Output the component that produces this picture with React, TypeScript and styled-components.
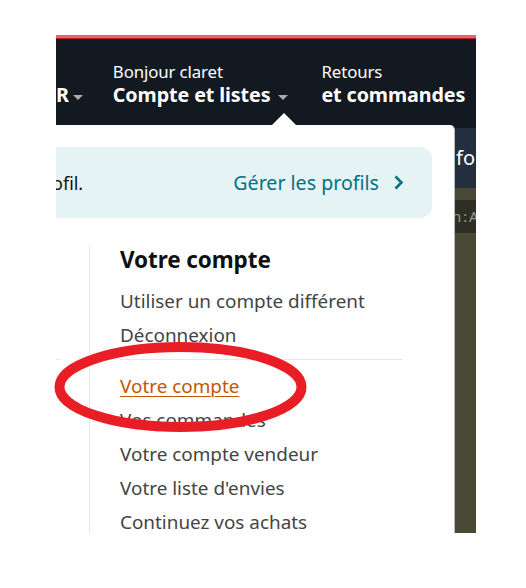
import React from "react";
import styled, { createGlobalStyle } from "styled-components";

const Global = createGlobalStyle`
  html, body { margin: 0; padding: 0; background: #ffffff; }
  body { font-family: "Noto Sans", "Open Sans", Arial, sans-serif; }
`;

const Page = styled.div`
  position: relative;
  width: 526px;
  height: 588px;
  overflow: hidden;
  background: #ffffff;
`;

const Shot = styled.div`
  margin: 35px 0 0 56px;
  width: 420px;
  height: 498px;
  overflow: hidden;
  display: flex;
  flex-direction: column;
  background: #131921;
`;

const Stripe = styled.div`
  flex: none;
  height: 3px;
  background: #e6646f;
  border-bottom: 1px solid #c21b2b;
`;

const Header = styled.header`
  position: relative;
  flex: none;
  height: 86px;
  box-sizing: border-box;
  padding-top: 23px;
  display: flex;
  align-items: flex-start;
  gap: 30px;
  color: #ffffff;
`;

const NavItem = styled.div<{ $pad?: number }>`
  display: flex;
  flex-direction: column;
  padding-left: ${(p) => p.$pad ?? 0}px;
`;

const Line1 = styled.span`
  font-size: 16.8px;
  line-height: 20px;
  height: 20px;
  white-space: nowrap;
  letter-spacing: -0.1px;
`;

const Line2 = styled.span`
  display: flex;
  align-items: center;
  font-size: 19.7px;
  font-weight: 700;
  line-height: 25px;
  white-space: nowrap;
  letter-spacing: -0.1px;
`;

const Caret = styled.span<{ $gap: number }>`
  display: inline-block;
  margin-left: ${(p) => p.$gap}px;
  margin-top: 6px;
  width: 0;
  height: 0;
  border-left: 5px solid transparent;
  border-right: 5px solid transparent;
  border-top: 5px solid #a7acb2;
`;

const Pointer = styled.span`
  position: absolute;
  left: 216px;
  bottom: 0;
  width: 0;
  height: 0;
  border-left: 12px solid transparent;
  border-right: 12px solid transparent;
  border-bottom: 12px solid #ffffff;
`;

const Body = styled.div`
  flex: 1;
  display: flex;
  min-height: 0;
`;

const Panel = styled.div`
  width: 398px;
  flex: none;
  background: #ffffff;
  border-right: 1px solid #b8b8b8;
  border-top-right-radius: 5px;
  display: flex;
  flex-direction: column;
  overflow: hidden;
`;

const ProfileBox = styled.div`
  margin-top: 22px;
  width: 376px;
  height: 71px;
  flex: none;
  box-sizing: border-box;
  background: #e6f3f4;
  border-radius: 0 12px 12px 0;
  display: flex;
  align-items: center;
  justify-content: space-between;
  padding-right: 29px;
`;

const ProfileNote = styled.span`
  margin-left: -4px;
  font-size: 18px;
  color: #0f1111;
`;

const ManageLink = styled.span`
  display: flex;
  align-items: center;
  gap: 15px;
  font-size: 19.6px;
  color: #007185;
`;

const Columns = styled.div`
  margin-top: 27px;
  flex: 1;
  display: flex;
`;

const Stub = styled.div`
  width: 33px;
  flex: none;
`;

const StubRule = styled.div`
  margin-top: 114px;
  width: 4px;
  height: 1px;
  background: #e7e7e7;
`;

const AccountColumn = styled.div`
  border-left: 1px solid #e7e7e7;
  padding-left: 30px;
  width: 283px;
  display: flex;
  flex-direction: column;
`;

const Heading = styled.h3`
  margin: 0 0 9px;
  font-size: 22.5px;
  line-height: 30px;
  font-weight: 700;
  color: #0f1111;
  letter-spacing: -0.1px;
`;

const Item = styled.a<{ $active?: boolean }>`
  display: block;
  height: 34px;
  line-height: 34px;
  font-size: 18.9px;
  white-space: nowrap;
  color: ${(p) => (p.$active ? "#c45500" : "#444444")};
  text-decoration: ${(p) => (p.$active ? "underline" : "none")};
  text-underline-offset: 3px;
  text-decoration-thickness: 1px;
`;

const Divider = styled.hr`
  margin: 7px 0 9px;
  border: 0;
  height: 1px;
  background: #e7e7e7;
`;

const Side = styled.div`
  flex: 1;
  display: flex;
  flex-direction: column;
  background: #4a4935;
  overflow: hidden;
`;

const SideTop = styled.div`
  height: 3px;
  background: #131921;
`;

const SubNav = styled.div`
  height: 60px;
  background: #232f3e;
  color: #ffffff;
  font-size: 20px;
  line-height: 60px;
  padding-left: 1px;
  white-space: nowrap;
`;

const Banner = styled.div`
  margin-top: 12px;
  height: 33px;
  background: #2f2e24;
  color: #9a9a8e;
  font-size: 15px;
  line-height: 33px;
  white-space: nowrap;
  text-indent: -3px;
  word-spacing: -2px;
`;

const Annotation = styled.svg`
  position: absolute;
  left: 0;
  top: 0;
  pointer-events: none;
`;

const Chevron = () => (
  <svg width="9" height="15" viewBox="0 0 9 15">
    <polyline points="1.5,1.5 7.5,7.5 1.5,13.5" fill="none" stroke="#007185" strokeWidth="2.6" />
  </svg>
);

const items = ["Utiliser un compte différent", "Déconnexion"];
const items2 = [
  "Vos commandes",
  "Votre compte vendeur",
  "Votre liste d'envies",
  "Continuez vos achats",
];

export default function App() {
  return (
    <Page>
      <Global />
      <Shot>
        <Stripe />
        <Header>
          <NavItem>
            <Line1 />
            <Line2>
              R<Caret $gap={4} />
            </Line2>
          </NavItem>
          <NavItem>
            <Line1>Bonjour claret</Line1>
            <Line2>
              Compte et listes<Caret $gap={8} />
            </Line2>
          </NavItem>
          <NavItem $pad={3}>
            <Line1>Retours</Line1>
            <Line2>et commandes</Line2>
          </NavItem>
          <Pointer />
        </Header>
        <Body>
          <Panel>
            <ProfileBox>
              <ProfileNote>ofil.</ProfileNote>
              <ManageLink>
                Gérer les profils
                <Chevron />
              </ManageLink>
            </ProfileBox>
            <Columns>
              <Stub>
                <StubRule />
              </Stub>
              <AccountColumn>
                <Heading>Votre compte</Heading>
                {items.map((t) => (
                  <Item key={t}>{t}</Item>
                ))}
                <Divider />
                <Item $active>Votre compte</Item>
                {items2.map((t) => (
                  <Item key={t}>{t}</Item>
                ))}
              </AccountColumn>
            </Columns>
          </Panel>
          <Side>
            <SideTop />
            <SubNav>fo</SubNav>
            <Banner>n : A</Banner>
          </Side>
        </Body>
      </Shot>
      <Annotation width="526" height="588" viewBox="0 0 526 588">
        <ellipse cx="180.5" cy="387" rx="121" ry="40" fill="none" stroke="#e81d25" strokeWidth="10" />
      </Annotation>
    </Page>
  );
}
